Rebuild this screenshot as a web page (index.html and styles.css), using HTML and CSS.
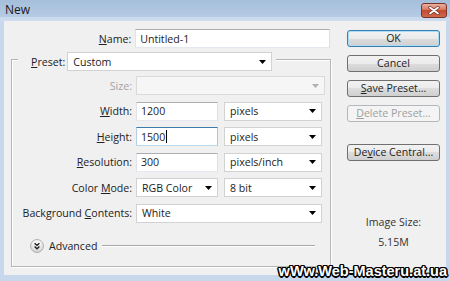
FILE: index.html
```html
<!doctype html>
<html>
  <head>
    <meta charset="utf-8">
    <title>New</title>
    <link rel="stylesheet" href="styles.css">
  </head>
  <body>
    <div class="window">
      <div class="titlebar">
        <span class="title">New</span>
        <span class="close">
          <svg width="12" height="9" viewBox="0 0 12 9"><path d="M2 1.5 10 7.5 M10 1.5 2 7.5" stroke="#6a2a20" stroke-width="3.2" stroke-linecap="round"/><path d="M2 1.5 10 7.5 M10 1.5 2 7.5" stroke="#fff" stroke-width="1.8" stroke-linecap="round"/></svg>
        </span>
      </div>

      <div class="body">
        <div class="left">
          <div class="row name-row">
            <label class="lbl"><u>N</u>ame:</label>
            <input class="field name" value="Untitled-1">
          </div>

          <fieldset class="group">
            <legend class="preset">
              <label><u>P</u>reset:</label>
              <div class="select preset-select"><span>Custom</span><svg class="arrow" viewBox="0 0 7 4"><path d="M0 0h7L3.5 4z"/></svg></div>
            </legend>

            <div class="rows">
              <div class="row">
                <label class="lbl off">Size:</label>
                <div class="select off size"><span></span><svg class="arrow" viewBox="0 0 7 4"><path d="M0 0h7L3.5 4z"/></svg></div>
              </div>
              <div class="row">
                <label class="lbl"><u>W</u>idth:</label>
                <input class="field num" value="1200">
                <div class="select unit"><span>pixels</span><svg class="arrow" viewBox="0 0 7 4"><path d="M0 0h7L3.5 4z"/></svg></div>
              </div>
              <div class="row">
                <label class="lbl"><u>H</u>eight:</label>
                <div class="field num focus">1500<i class="caret"></i></div>
                <div class="select unit"><span>pixels</span><svg class="arrow" viewBox="0 0 7 4"><path d="M0 0h7L3.5 4z"/></svg></div>
              </div>
              <div class="row">
                <label class="lbl"><u>R</u>esolution:</label>
                <input class="field num" value="300">
                <div class="select unit"><span>pixels/inch</span><svg class="arrow" viewBox="0 0 7 4"><path d="M0 0h7L3.5 4z"/></svg></div>
              </div>
              <div class="row">
                <label class="lbl">Color <u>M</u>ode:</label>
                <div class="select num"><span>RGB Color</span><svg class="arrow" viewBox="0 0 7 4"><path d="M0 0h7L3.5 4z"/></svg></div>
                <div class="select unit"><span>8 bit</span><svg class="arrow" viewBox="0 0 7 4"><path d="M0 0h7L3.5 4z"/></svg></div>
              </div>
              <div class="row">
                <label class="lbl">Background <u>C</u>ontents:</label>
                <div class="select bg"><span>White</span><svg class="arrow" viewBox="0 0 7 4"><path d="M0 0h7L3.5 4z"/></svg></div>
              </div>
            </div>

            <div class="advanced">
              <svg width="14" height="14" viewBox="0 0 14 14">
                <defs><linearGradient id="chev" x1="0" y1="0" x2="0" y2="1"><stop offset="0" stop-color="#fdfdfd"/><stop offset="1" stop-color="#d6d6d6"/></linearGradient></defs>
                <circle cx="7" cy="7" r="6.4" fill="url(#chev)" stroke="#a9a9a9"/>
                <path d="M4.6 4.2 7 6.4 9.4 4.2 M4.6 7.6 7 9.8 9.4 7.6" fill="none" stroke="#1e1e1e" stroke-width="1.3"/>
              </svg>
              <span>Advanced</span>
              <i class="rule"></i>
            </div>
          </fieldset>
        </div>

        <div class="right">
          <div class="btn default">OK</div>
          <div class="btn">Cancel</div>
          <div class="btn"><u>S</u>ave Preset...</div>
          <div class="btn off"><u>D</u>elete Preset...</div>
          <div class="btn device">De<u>v</u>ice Central...</div>
          <div class="imgsize">Image Size:<br>5.15M</div>
        </div>
      </div>

      <div class="watermark">wWw.Web-Masteru.at.ua</div>
    </div>
  </body>
</html>
```

FILE: styles.css
```css
* {
  margin: 0;
  padding: 0;
  box-sizing: border-box;
}
html, body {
  width: 450px;
  height: 281px;
  overflow: hidden;
}
body {
  font-family: "Open Sans", "Noto Sans", sans-serif;
  font-size: 10.6px;
  color: #222;
}
u {
  text-underline-offset: 1px;
}

.window {
  position: relative;
  width: 450px;
  height: 281px;
  display: flex;
  flex-direction: column;
  background: #c7d8ec;
}
.titlebar {
  height: 21px;
  flex: none;
  display: flex;
  justify-content: space-between;
  align-items: flex-start;
  padding-left: 5px;
  background: linear-gradient(#a4bedb, #b6cbe4 80%, #cbdbee 82%, #cddcee);
}
.title {
  font-size: 12px;
  line-height: 19px;
  color: #1a1a1a;
}
.close {
  width: 26px;
  height: 15px;
  margin: 3px 3px 0 0;
  display: flex;
  align-items: center;
  justify-content: center;
  border: 1px solid #7a3427;
  border-radius: 3px;
  background: linear-gradient(#eab0a2, #d7775f 45%, #c44a30 50%, #d2694c);
}

.body {
  flex: 1;
  margin: 0 4px 6px;
  padding-top: 8px;
  display: flex;
  background: #f0f0f0;
}
.left {
  width: 326px;
  flex: none;
}

.row {
  display: flex;
  align-items: center;
  height: 19px;
}
.lbl {
  width: 120px;
  margin-right: 4px;
  text-align: right;
  white-space: nowrap;
}
.name-row .lbl {
  width: 128px;
}
.lbl.off {
  color: #a3a3a3;
}

.field {
  height: 19px;
  display: flex;
  align-items: center;
  padding: 0 4px;
  font: inherit;
  color: #222;
  background: #fff;
  border: 1px solid;
  border-color: #abadb3 #dbdfe6 #e3e9ef #e2e3ea;
  outline: none;
}
.field.name {
  width: 196px;
}
.field.num,
.select.num {
  width: 82px;
}
.field.focus {
  border-color: #3d7bad #a4c9e3 #b7d9ed #b5cfe7;
}
.caret {
  width: 1px;
  height: 13px;
  margin-left: 1px;
  background: #000;
}

.select {
  height: 19px;
  display: flex;
  align-items: center;
  justify-content: space-between;
  padding: 0 5px 0 5px;
  background: #fff;
  border: 1px solid #d2d2d2;
}
.select .arrow {
  width: 7px;
  height: 4px;
  fill: #000;
}
.select.off {
  background: #f6f6f6;
  border-color: #dadada;
}
.select.off .arrow {
  fill: #b0b0b0;
}
.select.unit {
  width: 98px;
  margin-left: 6px;
}
.select.size {
  width: 189px;
}
.select.bg {
  width: 186px;
}

.group {
  width: 320px;
  margin-left: 7px;
  padding: 5px 0 12px;
  border: 1px solid #b5b5b5;
  box-shadow: inset 1px 1px #fff, 1px 1px #fff;
}
.preset {
  display: flex;
  align-items: center;
  margin-left: 6px;
  padding: 4px 4px 0 13px;
  background: #f0f0f0;
}
.preset-select {
  width: 205px;
  margin-left: 2px;
}
.rows {
  display: flex;
  flex-direction: column;
  gap: 6.6px;
}

.advanced {
  display: flex;
  align-items: center;
  height: 15px;
  margin-top: 16px;
  padding: 0 15px 0 18px;
}
.advanced svg {
  flex: none;
}
.advanced span {
  margin-left: 5px;
}
.rule {
  flex: 1;
  height: 2px;
  margin: 0 0 0 5px;
  border-top: 1px solid #a9a9a9;
  border-bottom: 1px solid #fff;
}

.right {
  width: 93px;
  margin-left: 17px;
  padding-top: 1px;
  display: flex;
  flex-direction: column;
  gap: 8px;
}
.btn {
  height: 17px;
  line-height: 15px;
  text-align: center;
  white-space: nowrap;
  border: 1px solid #707070;
  border-radius: 3px;
  background: linear-gradient(#f2f2f2, #ebebeb 50%, #dddddd 50%, #cfcfcf);
}
.btn.default {
  border-color: #3c7fb1;
  box-shadow: inset 0 0 0 1px #a9dcf6;
}
.btn.off {
  color: #a0a0a0;
  border-color: #b5b8bb;
  background: #f4f4f4;
}
.btn.device {
  margin-top: 14px;
}
.imgsize {
  margin-top: 43px;
  line-height: 20px;
  text-align: center;
  color: #333;
}

.watermark {
  position: absolute;
  right: 3px;
  bottom: 0;
  font-family: "Liberation Sans", Arial, sans-serif;
  font-weight: bold;
  font-size: 14.5px;
  line-height: 19px;
  color: #fff;
  text-shadow: -1px -1px 0 #000, 1px -1px 0 #000, -1px 1px 0 #000, 1px 1px 0 #000, 0 1.5px 0 #000, 0 -1.5px 0 #000, 1.5px 0 0 #000, -1.5px 0 0 #000;
}
```
